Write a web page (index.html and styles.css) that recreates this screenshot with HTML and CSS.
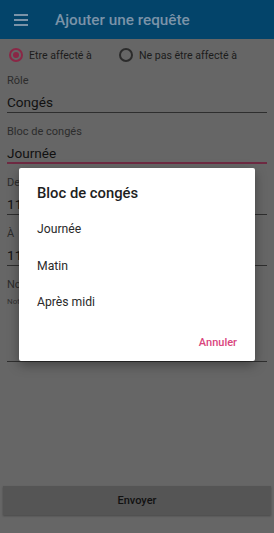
FILE: index.html
```html
<!DOCTYPE html>
<html lang="fr">
<head>
<meta charset="utf-8">
<title>Ajouter une requête</title>
<link rel="stylesheet" href="styles.css">
</head>
<body>
<div class="app">
  <header class="toolbar">
    <span class="menu"><i></i><i></i><i></i></span>
    <h1 class="title">Ajouter une requête</h1>
  </header>
  <main class="form">
    <div class="radios">
      <label class="radio"><span class="dot on"></span>Etre affecté à</label>
      <label class="radio"><span class="dot"></span>Ne pas être affecté à</label>
    </div>
    <div class="field">
      <div class="label">Rôle</div>
      <div class="value">Congés</div>
    </div>
    <div class="field focus">
      <div class="label">Bloc de congés</div>
      <div class="value">Journée</div>
    </div>
    <div class="field">
      <div class="label">De</div>
      <div class="value">11/05/2020</div>
    </div>
    <div class="field">
      <div class="label">À</div>
      <div class="value">11/05/2020</div>
    </div>
    <div class="field notes">
      <div class="label">Notes</div>
      <div class="hint">Notes</div>
    </div>
  </main>
  <div class="spacer"></div>
  <button class="send">Envoyer</button>
</div>
<div class="dialog">
  <h2 class="dtitle">Bloc de congés</h2>
  <ul class="options">
    <li>Journée</li>
    <li>Matin</li>
    <li>Après midi</li>
  </ul>
  <div class="actions"><span class="cancel">Annuler</span></div>
</div>
</body>
</html>
```
FILE: styles.css
```css
html, body {
  margin: 0;
  padding: 0;
  background: #666666;
  font-family: Roboto, "Noto Sans", sans-serif;
}
.app {
  display: flex;
  flex-direction: column;
  height: 533px;
}
.toolbar {
  height: 39px;
  background: #03446a;
  display: flex;
  align-items: center;
  padding-left: 14px;
  box-sizing: border-box;
}
.menu {
  display: flex;
  flex-direction: column;
  gap: 3px;
  width: 14px;
}
.menu i {
  display: block;
  height: 2px;
  background: #7a93a8;
}
.title {
  margin: 0 0 0 27px;
  font-size: 15.3px;
  font-weight: 500;
  color: #7a93a8;
}
.form {
  padding: 0 7px;
}
.radios {
  display: flex;
  align-items: center;
  height: 32px;
  padding-left: 2px;
  gap: 27px;
}
.radio {
  display: flex;
  align-items: center;
  gap: 6px;
  font-size: 10.6px;
  color: #1c1c1c;
}
.dot {
  width: 14px;
  height: 14px;
  box-sizing: border-box;
  border: 2px solid #2b2b2b;
  border-radius: 50%;
  position: relative;
}
.dot.on {
  border-color: #8a2746;
}
.dot.on::after {
  content: "";
  position: absolute;
  left: 2px;
  top: 2px;
  width: 6px;
  height: 6px;
  border-radius: 50%;
  background: #8a2746;
}
.field {
  border-bottom: 1px solid #2e2e2e;
  padding-top: 3px;
  height: 38px;
  margin-bottom: 9px;
}
.field.focus {
  border-bottom: 2px solid #6e2a42;
  height: 37px;
}
.label {
  font-size: 11px;
  color: #2c2c2c;
  line-height: 14px;
}
.value {
  font-size: 13.6px;
  color: #111;
  line-height: 20px;
  margin-top: 4px;
}
.field.notes {
  height: 83px;
}
.hint {
  font-size: 8px;
  color: #333;
  margin-top: 5px;
}
.spacer {
  flex: 1;
}
.send {
  margin: 0 3px 18px;
  height: 29px;
  border: none;
  background: #555555;
  color: #111;
  font-family: Roboto, sans-serif;
  font-weight: 500;
  font-size: 11px;
  box-shadow: 0 1px 2px rgba(0,0,0,0.3);
}
.dialog {
  position: absolute;
  left: 19px;
  top: 168px;
  width: 236px;
  height: 193px;
  background: #ffffff;
  box-shadow: 0 4px 12px rgba(0,0,0,0.35);
  border-radius: 2px;
  display: flex;
  flex-direction: column;
}
.dtitle {
  margin: 15px 0 0 18px;
  font-size: 14.8px;
  font-weight: 500;
  color: #1e1e1e;
  line-height: 20px;
}
.options {
  list-style: none;
  margin: 16px 0 0;
  padding: 0;
}
.options li {
  height: 36.5px;
  line-height: 20px;
  padding-left: 18px;
  font-size: 12.2px;
  color: #2a2a2a;
}
.actions {
  display: flex;
  justify-content: flex-end;
  padding-right: 18px;
  margin-top: 7px;
}
.cancel {
  color: #d9457d;
  font-size: 11px;
  font-weight: 500;
}
```
